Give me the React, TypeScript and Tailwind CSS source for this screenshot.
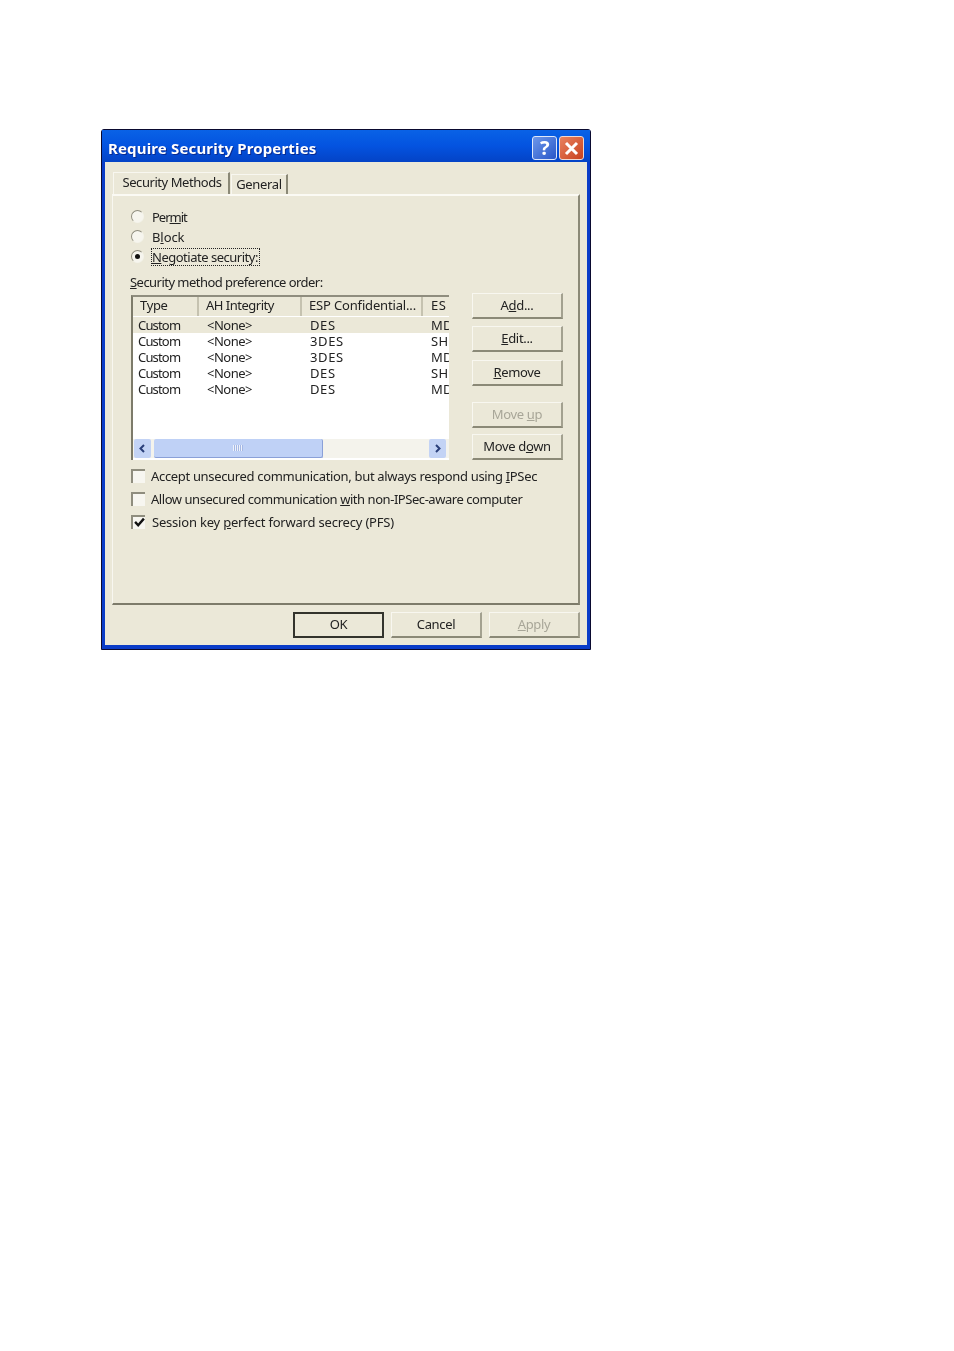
import React from "react";

const rows = [
  ["Custom", "<None>", "DES", "MD5"],
  ["Custom", "<None>", "3DES", "SH"],
  ["Custom", "<None>", "3DES", "MD5"],
  ["Custom", "<None>", "DES", "SH"],
  ["Custom", "<None>", "DES", "MD5"],
];

function Btn({ children, disabled, primary, className = "" }: { children: React.ReactNode; disabled?: boolean; primary?: boolean; className?: string }) {
  return (
    <div
      className={`flex h-[26px] w-[91px] items-center justify-center bg-[#ebe8d8] pb-[2px] ${disabled ? "text-[#a8a698]" : "text-[#222]"} ${primary ? "border-2 border-[#33332c]" : "border-t border-l border-t-[#f8f7f0] border-l-[#f8f7f0] border-b-2 border-r-2 border-b-[#8b8977] border-r-[#a3a190]"} ${className}`}
    >
      <span>{children}</span>
    </div>
  );
}

function Radio({ checked, children }: { checked?: boolean; children: React.ReactNode }) {
  return (
    <div className="flex h-5 items-center">
      <div className="flex h-[13px] w-[13px] items-center justify-center rounded-full border border-t-[#8f8d7e] border-l-[#8f8d7e] border-r-[#f4f3ea] border-b-[#f4f3ea] bg-[#f6f5ee]">
        {checked && <div className="h-[5px] w-[5px] rounded-full bg-[#111]" />}
      </div>
      <div className="ml-[8px] pt-[2px]">{children}</div>
    </div>
  );
}

function Check({ checked, children }: { checked?: boolean; children: React.ReactNode }) {
  return (
    <div className="flex h-[23px] items-center">
      <div className="flex h-[14px] w-[14px] items-center justify-center border-t-2 border-l-2 border-t-[#8f8d7e] border-l-[#8f8d7e] bg-[#f7f6f0]">
        {checked && (
          <svg width="11" height="11" viewBox="0 0 10 10">
            <path d="M1 4.5 L3.8 7.5 L9 1.5" fill="none" stroke="#111" strokeWidth="2.2" />
          </svg>
        )}
      </div>
      <div className={checked ? "ml-[7px]" : "ml-[6px]"}>{children}</div>
    </div>
  );
}

export default function App() {
  return (
    <div className="min-h-[1351px] bg-white pt-[129px] pl-[101px] text-[13px] leading-4 tracking-[-0.33px] text-[#222] [font-family:'Noto_Sans','Liberation_Sans',sans-serif]">
      <div className="flex h-[521px] w-[490px] flex-col rounded-t-[3px] border border-[#0a0a30] bg-[#0a3cc8] blur-[0.4px]">
        {/* Title bar */}
        <div className="flex h-[32px] items-center bg-gradient-to-b from-[#0a62e6] via-[#0453e0] to-[#0443c6] pl-[6px] pr-[6px]">
          <div className="flex-1 pt-[3px] text-[15px] font-bold tracking-[0.15px] text-white [text-shadow:1px_1px_#0a2a90]">Require Security Properties</div>
          <div className="mt-[4px] flex h-[24px] w-[25px] items-center justify-center rounded-[3px] border border-[#dfe8fa] bg-gradient-to-br from-[#6d97ea] to-[#2a56c8] text-[20px] font-bold text-white">?</div>
          <div className="mt-[4px] ml-[2px] flex h-[24px] w-[25px] items-center justify-center rounded-[3px] border border-[#f0d8d0] bg-gradient-to-br from-[#e8815e] to-[#c8401c]">
            <svg width="15" height="15" viewBox="0 0 15 15">
              <path d="M2 2 L13 13 M13 2 L2 13" stroke="#fff" strokeWidth="3" />
            </svg>
          </div>
        </div>
        {/* Client area */}
        <div className="mx-[3px] mb-[4px] flex flex-1 flex-col bg-[#ebe8d8] px-[7px] pt-[10px]">
          {/* Tabs */}
          <div className="flex h-[22px] items-end pl-px">
            <div className="flex h-[22px] w-[117px] items-center justify-center border-r-2 border-r-[#8b8977] border-t border-l border-t-[#f8f7f0] border-l-[#f8f7f0] bg-[#ebe8d8] pb-[4px] pl-[2px] tracking-[-0.45px]">Security Methods</div>
            <div className="ml-px flex h-[20px] w-[57px] items-center justify-center border-r-2 border-r-[#8b8977] border-t border-l border-t-[#f8f7f0] border-l-[#f8f7f0] pb-[2px]">General</div>
          </div>
          {/* Tab panel */}
          <div className="h-[411px] border-t-2 border-l border-t-[#fbfaf4] border-l-[#f8f7f0] border-r-2 border-b-2 border-r-[#8b8977] border-b-[#7d7b6a] pl-[18px] pt-[10px]">
            <Radio><span className="tracking-[-1px]">Per<u>m</u>it</span></Radio>
            <Radio><span className="tracking-[-0.1px]">B<u>l</u>ock</span></Radio>
            <Radio checked>
              <span className="-ml-px inline-block border border-dotted border-[#222] pr-px tracking-[-0.49px]"><u>N</u>egotiate security:</span>
            </Radio>
            <div className="mt-[6px] flex h-5 items-center -ml-px"><span className="tracking-[-0.54px]"><u>S</u>ecurity method preference order:</span></div>
            <div className="mt-px flex">
              {/* List view */}
              <div className="mt-[2px] flex h-[165px] w-[318px] flex-col overflow-hidden border-t-2 border-l-2 border-t-[#8f8d7e] border-l-[#7d7b6a] bg-white">
                <div className="flex h-[19px] bg-[#ebe8d8] leading-[17px] text-[#222]">
                  <div className="w-[66px] flex-none border-r-2 border-r-[#c5c2b0] pl-[7px]">Type</div>
                  <div className="w-[103px] flex-none border-r-2 border-r-[#c5c2b0] pl-[7px] tracking-[-0.5px]">AH Integrity</div>
                  <div className="w-[121px] flex-none border-r-2 border-r-[#c5c2b0] pl-[7px] tracking-[-0.16px]">ESP Confidential...</div>
                  <div className="w-[28px] flex-none overflow-hidden whitespace-nowrap pl-[8px] tracking-[0.6px]">ES</div>
                </div>
                <div className="flex-1 pt-[1px]">
                  {rows.map((r, i) => (
                    <div key={i} className={`flex h-4 leading-4 ${i === 0 ? "bg-[#ebe8d8]" : ""}`}>
                      <div className="w-[69px] flex-none pl-[5px] tracking-[-0.83px]">{r[0]}</div>
                      <div className="w-[102px] flex-none pl-[5px] tracking-[-0.5px]">{r[1]}</div>
                      <div className="w-[122px] flex-none pl-[6px] tracking-[0.6px]">{r[2]}</div>
                      <div className="w-[24px] flex-none overflow-hidden whitespace-nowrap pl-[5px] tracking-[0.3px]">{r[3]}</div>
                    </div>
                  ))}
                </div>
                {/* Scrollbar */}
                <div className="mb-[2px] flex h-[19px] items-stretch bg-[#f4f3ec] pl-px pr-[3px]">
                  <div className="flex w-[17px] items-center justify-center rounded-[2px] bg-[#c3d3f5]">
                    <svg width="9" height="9" viewBox="0 0 9 9"><path d="M6 1 L2.5 4.5 L6 8" fill="none" stroke="#2a3f7a" strokeWidth="2" /></svg>
                  </div>
                  <div className="ml-[3px] flex w-[169px] items-center justify-center rounded-[2px] border-r border-b border-r-[#8aa0d8] border-b-[#8aa0d8] bg-[#bfd1f6]">
                    <div className="h-[6px] w-[10px] bg-[repeating-linear-gradient(90deg,#eef2fb_0_1px,#a5b8e4_1px_2px)]" />
                  </div>
                  <div className="flex-1" />
                  <div className="flex w-[17px] items-center justify-center rounded-[2px] bg-[#c3d3f5]">
                    <svg width="9" height="9" viewBox="0 0 9 9"><path d="M3 1 L6.5 4.5 L3 8" fill="none" stroke="#2a3f7a" strokeWidth="2" /></svg>
                  </div>
                </div>
              </div>
              {/* Side buttons */}
              <div className="ml-[23px] flex flex-col">
                <Btn><>A<u>d</u>d...</></Btn>
                <Btn className="mt-[7px]"><><u>E</u>dit...</></Btn>
                <Btn className="mt-[8px]"><><u>R</u>emove</></Btn>
                <Btn disabled className="mt-[16px]"><>Move <u>u</u>p</></Btn>
                <Btn className="mt-[6px]"><>Move d<u>o</u>wn</></Btn>
              </div>
            </div>
            <div className="mt-[4px]">
              <Check><span>Accept unsecured communication, but always respond using <u>I</u>PSec</span></Check>
              <Check><span className="tracking-[-0.45px]">Allow unsecured communication <u>w</u>ith non-IPSec-aware computer</span></Check>
              <Check checked><span className="tracking-[-0.2px]">Session key <u>p</u>erfect forward secrecy (PFS)</span></Check>
            </div>
          </div>
          {/* Dialog buttons */}
          <div className="mt-[7px] flex justify-end gap-[7px]">
            <Btn primary>OK</Btn>
            <Btn>Cancel</Btn>
            <Btn disabled><><u>A</u>pply</></Btn>
          </div>
        </div>
      </div>
    </div>
  );
}
